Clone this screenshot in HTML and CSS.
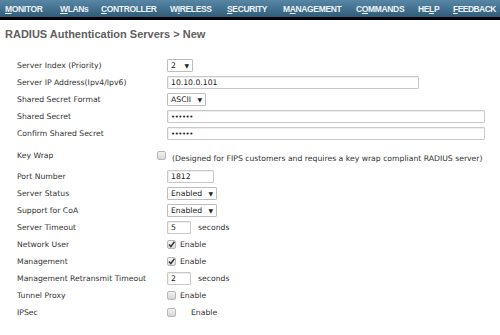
FILE: index.html
```html
<!DOCTYPE html>
<html>
<head>
<meta charset="utf-8">
<link rel="stylesheet" href="styles.css">
</head>
<body>
<nav class="nav">
  <span class="nav-item n1"><u>M</u>ONITOR</span>
  <span class="nav-item n2"><u>W</u>LANs</span>
  <span class="nav-item n3"><u>C</u>ONTROLLER</span>
  <span class="nav-item n4">W<u>I</u>RELESS</span>
  <span class="nav-item n5 active"><u>S</u>ECURITY</span>
  <span class="nav-item n6">M<u>A</u>NAGEMENT</span>
  <span class="nav-item n7">C<u>O</u>MMANDS</span>
  <span class="nav-item n8">HE<u>L</u>P</span>
  <span class="nav-item n9"><u>F</u>EEDBACK</span>
</nav>
<h1 class="title">RADIUS Authentication Servers &gt; New</h1>
<div class="form">
  <div class="row"><span class="label">Server Index (Priority)</span><span class="ctrl"><span class="select w-idx">2<span class="arrow">▼</span></span></span></div>
  <div class="row"><span class="label">Server IP Address(Ipv4/Ipv6)</span><span class="ctrl"><span class="input w-ip">10.10.0.101</span></span></div>
  <div class="row"><span class="label">Shared Secret Format</span><span class="ctrl"><span class="select w-fmt">ASCII<span class="arrow">▼</span></span></span></div>
  <div class="row"><span class="label">Shared Secret</span><span class="ctrl"><span class="input w-full dots">••••••</span></span></div>
  <div class="row"><span class="label">Confirm Shared Secret</span><span class="ctrl"><span class="input w-full dots">••••••</span></span></div>
  <div class="row row-key"><span class="label">Key Wrap</span><span class="ctrl ctrl-key"><span class="check"></span><span class="note">(Designed for FIPS customers and requires a key wrap compliant RADIUS server)</span></span></div>
  <div class="row"><span class="label">Port Number</span><span class="ctrl"><span class="input w-port">1812</span></span></div>
  <div class="row"><span class="label">Server Status</span><span class="ctrl"><span class="select w-en">Enabled<span class="arrow">▼</span></span></span></div>
  <div class="row"><span class="label">Support for CoA</span><span class="ctrl"><span class="select w-en">Enabled<span class="arrow">▼</span></span></span></div>
  <div class="row"><span class="label">Server Timeout</span><span class="ctrl"><span class="input w-num">5</span><span class="after">seconds</span></span></div>
  <div class="row"><span class="label">Network User</span><span class="ctrl"><span class="check checked"><svg viewBox="0 0 9 9" width="9" height="9"><path d="M2 4.6 L3.8 6.6 L7.4 1.8" fill="none" stroke="#333" stroke-width="1.5"/></svg></span><span class="after-check">Enable</span></span></div>
  <div class="row"><span class="label">Management</span><span class="ctrl"><span class="check checked"><svg viewBox="0 0 9 9" width="9" height="9"><path d="M2 4.6 L3.8 6.6 L7.4 1.8" fill="none" stroke="#333" stroke-width="1.5"/></svg></span><span class="after-check">Enable</span></span></div>
  <div class="row"><span class="label">Management Retransmit Timeout</span><span class="ctrl"><span class="input w-num">2</span><span class="after">seconds</span></span></div>
  <div class="row"><span class="label">Tunnel Proxy</span><span class="ctrl"><span class="check"></span><span class="after-check">Enable</span></span></div>
  <div class="row"><span class="label">IPSec</span><span class="ctrl"><span class="check"></span><span class="after-check wide">Enable</span></span></div>
</div>
</body>
</html>
```
FILE: styles.css
```css
html, body {
  margin: 0;
  padding: 0;
  background: #fff;
}
body {
  font-family: "DejaVu Sans", Verdana, sans-serif;
  color: #333;
}
.nav {
  display: flex;
  height: 17px;
  background: linear-gradient(#5887a6, #2f5d79);
  border-bottom: 3px solid #000;
  overflow: hidden;
}
.nav-item {
  flex: none;
  box-sizing: border-box;
  font-family: "Liberation Sans", Arial, sans-serif;
  font-weight: bold;
  font-size: 8.5px;
  letter-spacing: -0.35px;
  color: #eef3f6;
  padding-left: 7px;
  padding-top: 1px;
  line-height: 16px;
  height: 17px;
  white-space: nowrap;
}
.n1 { width: 53px; padding-left: 5px; }
.n2 { width: 41px; }
.n3 { width: 69px; }
.n4 { width: 57px; }
.n5 { width: 56px; }
.n6 { width: 73px; }
.n7 { width: 62px; }
.n8 { width: 36px; }
.n9 { width: 53px; padding-left: 6px; letter-spacing: -0.55px; }
.nav-item u {
  text-decoration: underline;
  text-underline-offset: 1px;
}
.nav-item.active {
  box-shadow: 0 3px 0 #f29100;
  position: relative;
  z-index: 1;
}
.title {
  margin: 0;
  padding: 8px 0 0 5px;
  height: 28px;
  box-sizing: border-box;
  font-family: "Liberation Sans", Arial, sans-serif;
  font-size: 11px;
  font-weight: bold;
  color: #606060;
  line-height: 13px;
}
.form {
  padding: 9px 0 0 17px;
}
.row {
  display: grid;
  grid-template-columns: 150px 1fr;
  height: 17px;
  align-items: center;
  font-size: 7.7px;
}
.row-key {
  height: 26px;
}
.label {
  white-space: nowrap;
  color: #333;
}
.ctrl {
  display: flex;
  align-items: center;
}
.ctrl-key {
  margin-left: -10px;
}
.ctrl-key .note {
  margin-left: 6px;
  position: relative;
  top: 3px;
  white-space: nowrap;
  color: #333;
}
.input, .select {
  box-sizing: border-box;
  height: 13px;
  border: 1px solid #c8c8c8;
  border-radius: 1px;
  background: #fff;
  padding: 0 3px;
  display: flex;
  align-items: center;
  font-size: 7.7px;
  color: #222;
  box-shadow: inset 1px 1px 0 #eee;
}
.select {
  border-color: #bdbdbd;
  box-shadow: none;
  justify-content: space-between;
}
.arrow {
  font-size: 6px;
  color: #222;
  margin-left: 4px;
}
.dots {
  font-size: 7px;
  letter-spacing: -0.5px;
}
.w-idx { width: 26px; }
.w-ip { width: 252px; }
.w-fmt { width: 39px; }
.w-full { width: 318px; }
.w-port { width: 47px; }
.w-en { width: 50px; }
.w-num { width: 24px; }
.after {
  margin-left: 7px;
}
.check {
  box-sizing: border-box;
  width: 9px;
  height: 9px;
  border: 1px solid #b7b7b7;
  border-radius: 2px;
  background: linear-gradient(#f2f2f2, #d6d6d6);
  display: inline-flex;
  align-items: center;
  justify-content: center;
  flex: none;
}
.check.checked {
  background: linear-gradient(#f4f4f4, #dedede);
}
.check svg {
  display: block;
  margin: -1px;
}
.after-check {
  margin-left: 4px;
}
.after-check.wide {
  margin-left: 15px;
}
```
